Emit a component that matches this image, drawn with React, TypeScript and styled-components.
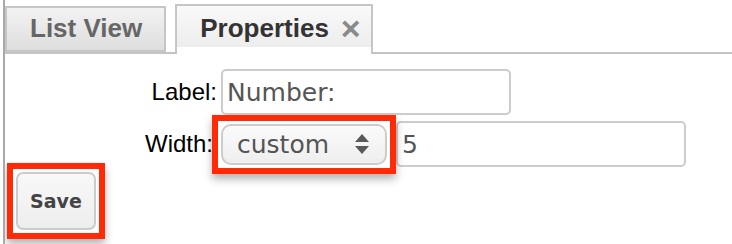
import styled, { createGlobalStyle } from "styled-components";

const GlobalStyle = createGlobalStyle`
  html, body {
    margin: 0;
    padding: 0;
    background: #ffffff;
  }
  body {
    font-family: "Liberation Sans", Arial, sans-serif;
  }
`;

export default function App() {
  return (
    <>
      <GlobalStyle />
      <StyledPage>
        <StyledTabBar>
          <StyledTab>List View</StyledTab>
          <StyledTab $active>
            Properties
            <StyledClose>×</StyledClose>
          </StyledTab>
        </StyledTabBar>
        <StyledForm>
          <StyledLabel>Label:</StyledLabel>
          <StyledRow>
            <StyledInput $width={290}>Number:</StyledInput>
          </StyledRow>
          <StyledLabel $shift={4}>Width:</StyledLabel>
          <StyledRow>
            <StyledHighlight>
              <StyledSelect>
                custom
                <svg width="18" height="24" viewBox="0 0 18 24">
                  <path d="M9 2 L16 10 L2 10 Z" fill="#5a5a5a" />
                  <path d="M2 14 L16 14 L9 22 Z" fill="#5a5a5a" />
                </svg>
              </StyledSelect>
            </StyledHighlight>
            <StyledInput $width={290}>5</StyledInput>
          </StyledRow>
        </StyledForm>
        <StyledFooter>
          <StyledHighlight>
            <StyledButton>Save</StyledButton>
          </StyledHighlight>
        </StyledFooter>
      </StyledPage>
    </>
  );
}

const StyledPage = styled.div`
  margin-left: 3px;
  border-left: 2px solid #a9a9a9;
  height: 244px;
  box-sizing: border-box;
  overflow: hidden;
`;

const StyledTabBar = styled.div`
  display: flex;
  align-items: flex-end;
  gap: 9px;
  height: 54px;
  padding-top: 6px;
  box-sizing: border-box;
  border-bottom: 2px solid #c4c4c4;
`;

const StyledTab = styled.div<{ $active?: boolean }>`
  display: flex;
  align-items: center;
  gap: 12px;
  height: ${(p) => (p.$active ? "50px" : "46px")};
  margin-bottom: ${(p) => (p.$active ? "-2px" : "0")};
  padding: ${(p) => (p.$active ? "0 10px 4px 23px" : "0 22px 2px 23px")};
  box-sizing: border-box;
  border: 2px solid #c6c6c6;
  border-bottom: ${(p) => (p.$active ? "none" : "2px solid #c6c6c6")};
  background: ${(p) =>
    p.$active
      ? "linear-gradient(#f9f9f9, #ededed 85%, #ffffff 86%)"
      : "linear-gradient(#f3f3f3, #dedede)"};
  color: ${(p) => (p.$active ? "#333333" : "#666666")};
  font-weight: bold;
  font-size: 26px;
  line-height: 1;
`;

const StyledClose = styled.span`
  color: #8a8a8a;
  font-size: 34px;
  font-weight: bold;
`;

const StyledForm = styled.div`
  display: grid;
  grid-template-columns: 212px auto;
  column-gap: 4px;
  row-gap: 6px;
  padding-top: 15px;
  align-items: center;
`;

const StyledLabel = styled.div<{ $shift?: number }>`
  text-align: right;
  padding-right: ${(p) => p.$shift ?? 0}px;
  font-size: 24px;
  color: #000000;
`;

const StyledRow = styled.div`
  display: flex;
  align-items: center;
  gap: 9px;
`;

const StyledInput = styled.div<{ $width: number }>`
  width: ${(p) => p.$width}px;
  height: 46px;
  box-sizing: border-box;
  border: 2px solid #cccccc;
  border-radius: 5px;
  padding-left: 4px;
  display: flex;
  align-items: center;
  font-family: "DejaVu Sans", Verdana, sans-serif;
  font-size: 25px;
  color: #555555;
`;

const StyledHighlight = styled.div`
  position: relative;
  display: flex;

  &::after {
    content: "";
    position: absolute;
    inset: -9px;
    border: 6px solid #ff2b06;
    box-shadow: 0 5px 8px rgba(0, 0, 0, 0.3);
    pointer-events: none;
  }
`;

const StyledSelect = styled.div`
  width: 166px;
  height: 41px;
  box-sizing: border-box;
  border: 2px solid #cccccc;
  border-radius: 10px;
  background: linear-gradient(#fbfbfb, #eeeeee);
  display: flex;
  align-items: center;
  justify-content: space-between;
  padding: 0 14px 0 14px;
  font-family: "DejaVu Sans", Verdana, sans-serif;
  font-size: 25px;
  color: #555555;
`;

const StyledFooter = styled.div`
  padding: 5px 0 0 11px;
  display: flex;
`;

const StyledButton = styled.div`
  width: 80px;
  height: 58px;
  box-sizing: border-box;
  border: 2px solid #cccccc;
  border-radius: 7px;
  background: linear-gradient(#f8f8f8, #eeeeee);
  display: flex;
  align-items: center;
  justify-content: center;
  font-family: "DejaVu Sans", Verdana, sans-serif;
  font-weight: bold;
  font-size: 19px;
  color: #444444;
`;
